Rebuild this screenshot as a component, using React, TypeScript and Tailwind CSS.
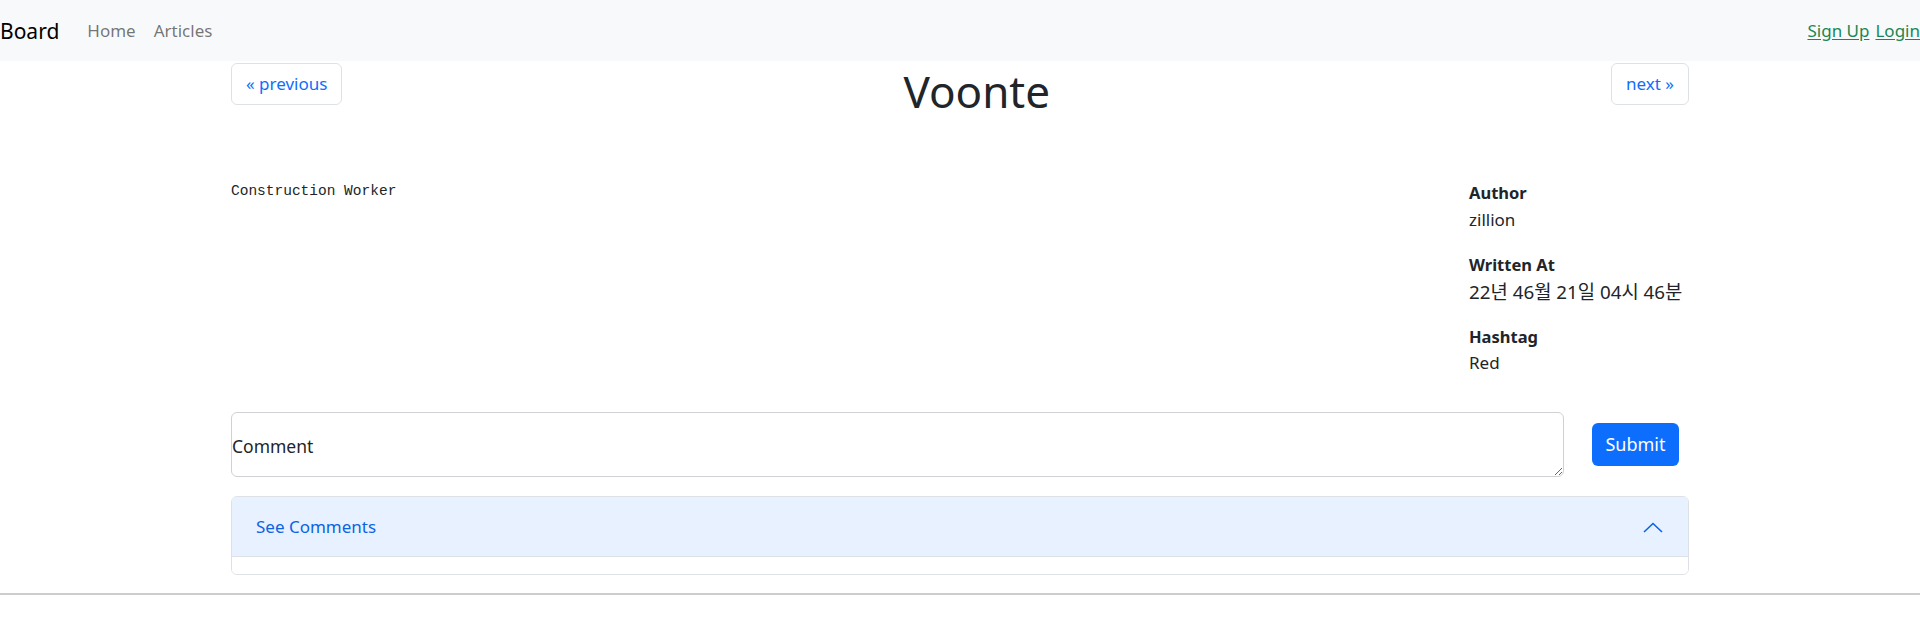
import React from "react";

const sans = { fontFamily: '"Noto Sans", "Noto Sans CJK KR", sans-serif' };

export default function App() {
  return (
    <div className="min-h-[630px] bg-white text-[#212529] text-[17px] leading-6" style={sans}>
      <nav className="flex h-[61px] items-center justify-between bg-[#f8f9fa]">
        <div className="flex items-center">
          <span className="text-[21px] leading-[30px] text-black">Board</span>
          <a className="ml-[28px] text-[17px] text-black/55">Home</a>
          <a className="ml-[18px] text-[17px] text-black/55">Articles</a>
        </div>
        <div className="flex items-center gap-[6px] text-[17px] text-[#198754]">
          <a className="underline underline-offset-2">Sign Up</a>
          <a className="underline underline-offset-2">Login</a>
        </div>
      </nav>

      <main className="mx-auto w-[1458px] pt-[2px]">
        <div className="flex items-start justify-between">
          <a className="flex h-[42px] items-center rounded-[6px] border border-[#dee2e6] px-[14px] text-[17px] text-[#0d6efd]">
            « previous
          </a>
          <h1 className="mt-[2px] text-[44px] leading-[1.2] font-normal">Voonte</h1>
          <a className="flex h-[42px] items-center rounded-[6px] border border-[#dee2e6] px-[14px] text-[17px] text-[#0d6efd]">
            next »
          </a>
        </div>

        <div className="mt-[63px] flex items-start">
          <pre className="mt-[-2px] flex-1 text-[14.5px] leading-6" style={{ fontFamily: '"Liberation Mono", monospace' }}>
            Construction Worker
          </pre>
          <div className="w-[220px]">
            <dl>
              <dt className="text-[16.5px] font-bold">Author</dt>
              <dd className="mt-[3px] mb-[21px] text-[17px]">zillion</dd>
            </dl>
            <dl>
              <dt className="text-[16.5px] font-bold">Written At</dt>
              <dd className="mt-[3px] mb-[21px] text-[18.8px]">22년 46월 21일 04시 46분</dd>
            </dl>
            <dl>
              <dt className="text-[16.5px] font-bold">Hashtag</dt>
              <dd className="mt-[2px] mb-[21px] text-[17px]">Red</dd>
            </dl>
          </div>
        </div>

        <div className="mt-[16px] flex items-start">
          <textarea
            className="h-[65px] flex-1 rounded-[6px] border border-[#cfd1d4] pt-[19px] text-[17.5px] leading-7 text-[#212529] placeholder:text-[#212529] outline-none"
            placeholder="Comment"
            style={sans}
          />
          <div className="flex w-[125px] justify-start pl-[28px] pt-[11px]">
            <button className="flex h-[43px] w-[87px] items-center justify-center rounded-[6px] bg-[#0d6efd] text-[18px] text-white">
              Submit
            </button>
          </div>
        </div>

        <div className="mt-[19px] overflow-hidden rounded-[6px] border border-[#dee2e6]">
          <div className="flex h-[60px] items-center justify-between border-b border-[#dee2e6] bg-[#e7f1ff] pl-[24px] pr-[25px] pt-[2px] text-[#0c63e4]">
            <span className="text-[17px]">See Comments</span>
            <svg width="20" height="11" viewBox="0 0 20 11" fill="none">
              <polyline points="1,10 10,1.5 19,10" stroke="#0c63e4" strokeWidth="1.6" />
            </svg>
          </div>
          <div className="h-[17px] bg-white" />
        </div>
      </main>

      <hr className="mt-[18px] border-t-2 border-[#cccccc]" />
    </div>
  );
}
